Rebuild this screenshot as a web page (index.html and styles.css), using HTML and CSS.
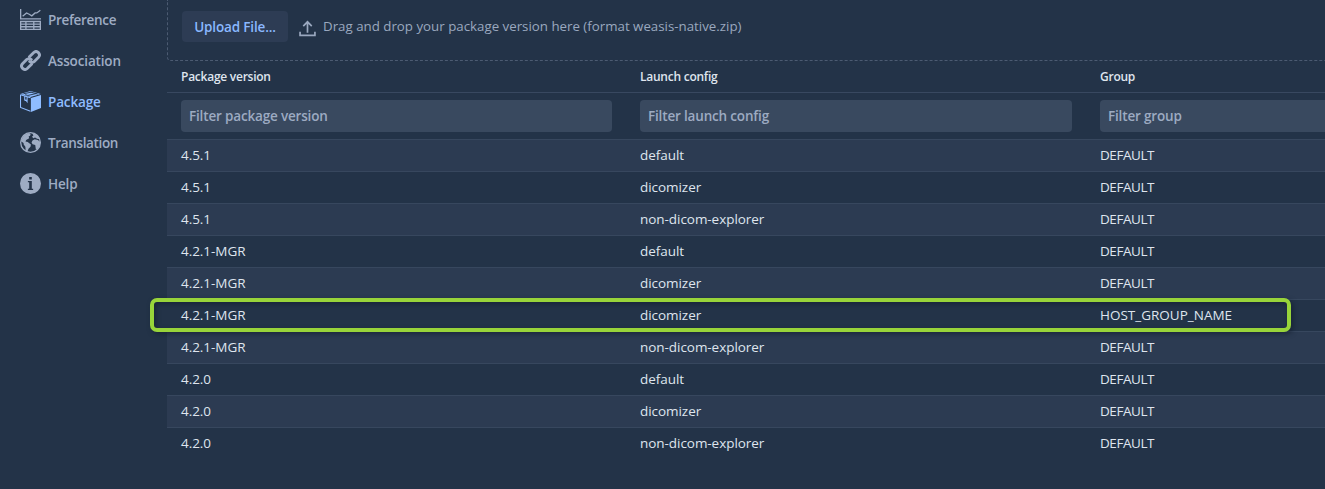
FILE: index.html
```html
<!DOCTYPE html>
<html lang="en">
<head>
<meta charset="utf-8">
<title>Package</title>
<link rel="stylesheet" href="styles.css">
</head>
<body>
<div class="app">
  <nav class="sidebar">
    <a class="nav-item preference"><svg class="nav-icon" viewBox="0 0 16 16"><path d="M0 0h1v7h15v1H0z"/><path d="M2 5.500 5 3l2 1 2 1.200L11.500 3h1.300L15.500 1" fill="none" stroke="currentColor"/><path fill-rule="evenodd" d="M0 9h16v7H0zM1 10v1h3v-1zm4 0v1h5v-1zm6 0v1h4v-1zM1 12v1h3v-1zm4 0v1h5v-1zm6 0v1h4v-1zM1 14v1h3v-1zm4 0v1h5v-1zm6 0v1h4v-1z"/></svg><span>Preference</span></a>
    <a class="nav-item"><svg class="nav-icon" viewBox="0 0 16 16"><g fill="none" stroke="currentColor" stroke-width="2.200" stroke-linecap="round" stroke-linejoin="round"><path d="M7.200 5.100 10.500 1.900a2.550 2.550 0 0 1 3.600 3.600L10.900 8.700a2.500 2.500 0 0 1-3.500.1"/><path d="M8.800 10.900 5.500 14.100a2.550 2.550 0 0 1-3.600-3.600L5.100 7.300a2.500 2.500 0 0 1 3.500-.1"/></g></svg><span>Association</span></a>
    <a class="nav-item active"><svg class="nav-icon" viewBox="0 0 16 16"><path d="M8.300 5.400 16 3.100v9.800L8.300 16z"/><path d="M8 0 15.800 2.200 8 4.600.2 2.200z"/><path class="seam" d="M2.600 2.100 8.600.9M4 2.800 6 3.400 12.500 1.900M8 .8 13.500 2.300"/><path d="M.4 2.900v9.600L8 15.500M.4 2.900 8 5.200M3.600 4v3.200M5.400 4.500v3.700L4.500 7l-.9.2" fill="none" stroke="currentColor" stroke-width=".8"/></svg><span>Package</span></a>
    <a class="nav-item translation"><svg class="nav-icon" viewBox="0 0 16 16"><circle cx="8" cy="8" r="7.500" fill="none" stroke="currentColor"/><path d="M3 2.500 6.800.7 8.100 1.500 7.700 2.800 6.600 3.400 7 4.700 4.700 6.100 4.200 7.300 5.900 7.600 8.300 9.500 8 11.300 6.500 12.700 5.600 15 4.300 14.500 4.100 11.300 2.800 9.500 2.700 8.300.5 6.800z"/><path d="M9.200.7 12 1.500l2 2 1 2-2-.3-1.500-1-1.500.5-.8-1.200 1-.8zM9.500 6.400l1.700-.9 2.400.6 1.900 1.500-.4 2.700-1.600 2.600-1.400.4-.5-3.400-2-.5-.8-1.400z"/></svg><span>Translation</span></a>
    <a class="nav-item"><svg class="nav-icon" viewBox="0 0 16 16"><path fill-rule="evenodd" d="M8 0a8 8 0 1 0 0 16A8 8 0 0 0 8 0zM7 3h2v2H7zM6 6h3v6h1v1H6v-1h1V7H6z"/></svg><span>Help</span></a>
  </nav>
  <main class="content">
    <section class="dropzone">
      <button class="upload">Upload File...</button>
      <svg class="upload-icon" viewBox="0 0 16 16"><path d="M1 11v3.500h14V11M8 12V2M4 5.700l4-4 4 4" fill="none" stroke="currentColor" stroke-width="1.600"/></svg>
      <span class="hint">Drag and drop your package version here (format weasis-native.zip)</span>
    </section>
    <div class="grid">
      <div class="row head"><span>Package version</span><span>Launch config</span><span>Group</span></div>
      <div class="row filters"><span><input class="filter" placeholder="Filter package version"></span><span><input class="filter" placeholder="Filter launch config"></span><span><input class="filter" placeholder="Filter group"></span></div>
      <div class="row data"><span>4.5.1</span><span>default</span><span class="group">DEFAULT</span></div>
      <div class="row data"><span>4.5.1</span><span>dicomizer</span><span class="group">DEFAULT</span></div>
      <div class="row data"><span>4.5.1</span><span>non-dicom-explorer</span><span class="group">DEFAULT</span></div>
      <div class="row data"><span>4.2.1-MGR</span><span>default</span><span class="group">DEFAULT</span></div>
      <div class="row data"><span>4.2.1-MGR</span><span>dicomizer</span><span class="group">DEFAULT</span></div>
      <div class="row data"><span>4.2.1-MGR</span><span>dicomizer</span><span class="group host">HOST_GROUP_NAME</span><div class="highlight"></div></div>
      <div class="row data"><span>4.2.1-MGR</span><span>non-dicom-explorer</span><span class="group">DEFAULT</span></div>
      <div class="row data"><span>4.2.0</span><span>default</span><span class="group">DEFAULT</span></div>
      <div class="row data"><span>4.2.0</span><span>dicomizer</span><span class="group">DEFAULT</span></div>
      <div class="row data"><span>4.2.0</span><span>non-dicom-explorer</span><span class="group">DEFAULT</span></div>
    </div>
  </main>
</div>
</body>
</html>
```
FILE: styles.css
```css
* { box-sizing: border-box; }
body {
  margin: 0;
  height: 489px;
  overflow: hidden;
  background: #233348;
  color: #dfe5ee;
  font: 14px/20px "Open Sans", "Noto Sans", sans-serif;
}
.app { display: flex; width: 100%; height: 489px; overflow: hidden; }
.sidebar { width: 167px; flex: none; color: #9eacc3; }
.nav-item {
  display: flex;
  align-items: center;
  gap: 7px;
  height: 41px;
  padding-left: 20px;
  font-weight: 600;
  font-size: 13.500px;
  letter-spacing: -.15px;
}
.nav-item span { padding-bottom: 1px; }
.nav-item.preference { letter-spacing: -.3px; }
.nav-item.translation { letter-spacing: -.35px; }
.nav-item.active { color: #8fbcff; }
.nav-icon { width: 21px; height: 21px; margin-bottom: 2px; fill: currentColor; }
.seam { fill: none; stroke: #233348; stroke-width: .7; }
.content { width: 1380px; flex: none; }
.dropzone {
  display: flex;
  align-items: flex-start;
  height: 61px;
  padding: 11px 14px 0;
  border: 1px dashed #4c5b72;
  border-top: 0;
  border-radius: 0 0 4px 4px;
  color: #9aa8bf;
}
.upload {
  width: 106px;
  height: 31px;
  padding: 1px 0 0;
  border: 0;
  border-radius: 4px;
  background: #2d3c54;
  color: #8ab8ff;
  font: 600 13.500px/30px "Open Sans", "Noto Sans", sans-serif;
  letter-spacing: -.15px;
}
.upload-icon { width: 17px; height: 17px; margin: 9px 7px 0 11px; }
.hint { padding-top: 5px; font-size: 13.300px; white-space: nowrap; }
.row {
  position: relative;
  display: grid;
  grid-template-columns: 459px 460px 459px;
  align-items: center;
}
.row > span { padding: 0 14px; white-space: nowrap; }
.head { height: 31px; font-size: 12px; font-weight: 600; letter-spacing: -.25px; }
.head > span { padding-top: 1px; }
.filters { height: 47px; border-top: 1px solid #384860; }
.filter {
  display: block;
  width: 100%;
  height: 32px;
  padding: 0 8px;
  border: 0;
  border-radius: 4px;
  background: #39495f;
  font: 600 13.500px/20px "Open Sans", "Noto Sans", sans-serif;
  letter-spacing: -.17px;
}
.filter::placeholder { color: #9dabc2; opacity: 1; }
.data { height: 32px; border-top: 1px solid #37475e; font-size: 13.500px; letter-spacing: -.05px; }
.data:nth-child(odd) { background: #2c3b52; }
.data > span { padding-bottom: 2px; }
.data > .group { letter-spacing: -.45px; }
.data > .group.host { letter-spacing: 0; }
.highlight {
  position: absolute;
  z-index: 1;
  left: -17px;
  top: -2px;
  width: 1141px;
  height: 34px;
  border: 4px solid #98d43a;
  border-radius: 7px;
  box-shadow: 2px 2px 5px #101b2b99, inset 2px 2px 5px #101b2b99;
}
```
